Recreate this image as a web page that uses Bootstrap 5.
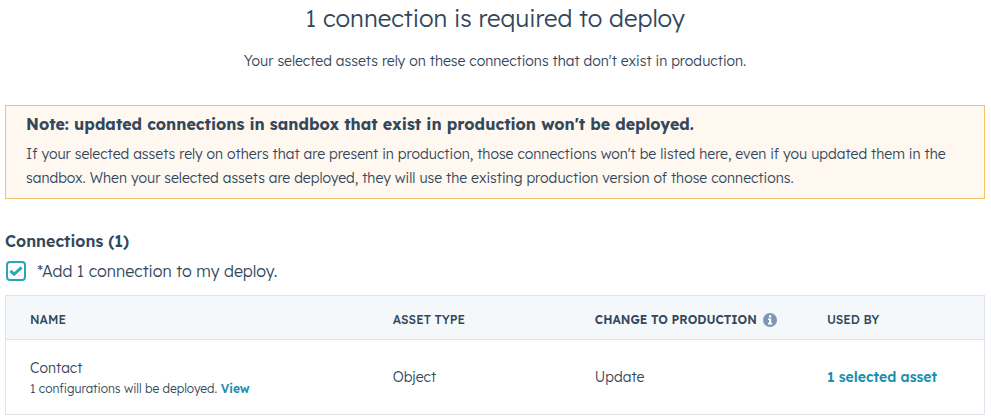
<!DOCTYPE html>
<html lang="en">
<head>
<meta charset="utf-8">
<meta name="viewport" content="width=device-width, initial-scale=1">
<title>Deploy connections</title>
<link href="https://cdn.jsdelivr.net/npm/bootstrap@5.3.0/dist/css/bootstrap.min.css" rel="stylesheet">
<style>
  body { font-family: "Lexend Deca", Inter, "Open Sans", sans-serif; font-size: 14px; font-weight: 300; line-height: 24px; color: #33475b; }
  .page { padding: 1px 6px 5px 5px; }
  .page-title { font-size: 24px; font-weight: 300; line-height: 34px; }
  .page-lead { margin-top: 14px; margin-bottom: 32px; }
  .note { background: #fef8f0; border: 1px solid #f5c26b; border-radius: 0; color: inherit; padding: 6px 20px 8px; margin-bottom: 30px; }
  .note-title { font-size: 16px; font-weight: 700; line-height: 24px; margin-bottom: 6px; }
  .section-title { font-size: 16px; font-weight: 600; line-height: 24px; }
  .add-row { gap: 11px; margin-top: 6px; margin-bottom: 12px; }
  .add-row .form-check-input { width: 20px; height: 20px; border: 2px solid #2ea3bd; border-radius: 4px; box-shadow: none; margin: 0 0 0 1px;
    background-color: #fff; background-size: 16px 16px; }
  .add-row .form-check-input:checked { border-color: #2ea3bd; background-color: #fff; background-image: url("data:image/svg+xml,%3Csvg xmlns='http://www.w3.org/2000/svg' viewBox='0 0 16 16'%3E%3Cpath d='M2.4 7.8l3.7 3.5L13.6 4.4' fill='none' stroke='%232ea3bd' stroke-width='3'/%3E%3C/svg%3E"); }
  .add-row label { font-size: 16px; line-height: 24px; }
  .asset-table { table-layout: fixed; border: 1px solid #dfe3eb; color: inherit; --bs-table-color: #33475b; }
  .asset-table > thead th { background: #f5f8fa; border-color: #dfe3eb; font-size: 12px; font-weight: 500; line-height: 18px; padding: 15px 24px 10px; text-transform: uppercase; white-space: nowrap; }
  .asset-table > thead th.is-sorted { font-weight: 600; }
  .asset-table > tbody td { border-color: #dfe3eb; padding: 16px 24px; }
  .col-name { width: 37.1%; } .col-type { width: 20.65%; } .col-change { width: 23.7%; }
  .info-label { gap: 6px; }
  .detail { font-size: 12px; line-height: 18px; }
  .action { color: #1a8fae; font-weight: 600; text-decoration: none; }
</style>
</head>
<body>
<main class="page container-fluid">
  <header class="text-center">
    <h1 class="page-title mb-0">1 connection is required to deploy</h1>
    <p class="page-lead">Your selected assets rely on these connections that don't exist in production.</p>
  </header>
  <section class="note alert" role="note">
    <h2 class="note-title">Note: updated connections in sandbox that exist in production won't be deployed.</h2>
    <p class="mb-0">If your selected assets rely on others that are present in production, those connections won't be listed here, even if you updated them in the sandbox. When your selected assets are deployed, they will use the existing production version of those connections.</p>
  </section>
  <h2 class="section-title mb-0">Connections (1)</h2>
  <div class="add-row d-flex align-items-center">
    <input class="form-check-input" type="checkbox" id="addConnection" checked>
    <label for="addConnection">*Add 1 connection to my deploy.</label>
  </div>
  <table class="asset-table table align-middle mb-0">
    <thead>
      <tr>
        <th scope="col" class="col-name">Name</th>
        <th scope="col" class="col-type">Asset type</th>
        <th scope="col" class="col-change is-sorted"><div class="info-label d-flex align-items-center">Change to production
          <svg width="14" height="14" viewBox="0 0 14 14" aria-hidden="true"><circle cx="7" cy="7" r="7" fill="#7c98b6"/><path d="M6 2.3h2.2v2.2H6zM5 5.6h3.2v4.2h1v1.6H5V9.8h1V7.1H5z" fill="#fff"/></svg></div></th>
        <th scope="col">Used by</th>
      </tr>
    </thead>
    <tbody>
      <tr>
        <td><div>Contact</div><div class="detail">1 configurations will be deployed. <a class="action" href="#">View</a></div></td>
        <td>Object</td>
        <td>Update</td>
        <td><a class="action" href="#">1 selected asset</a></td>
      </tr>
    </tbody>
  </table>
</main>
<script src="https://cdn.jsdelivr.net/npm/bootstrap@5.3.0/dist/js/bootstrap.bundle.min.js"></script>
</body>
</html>
